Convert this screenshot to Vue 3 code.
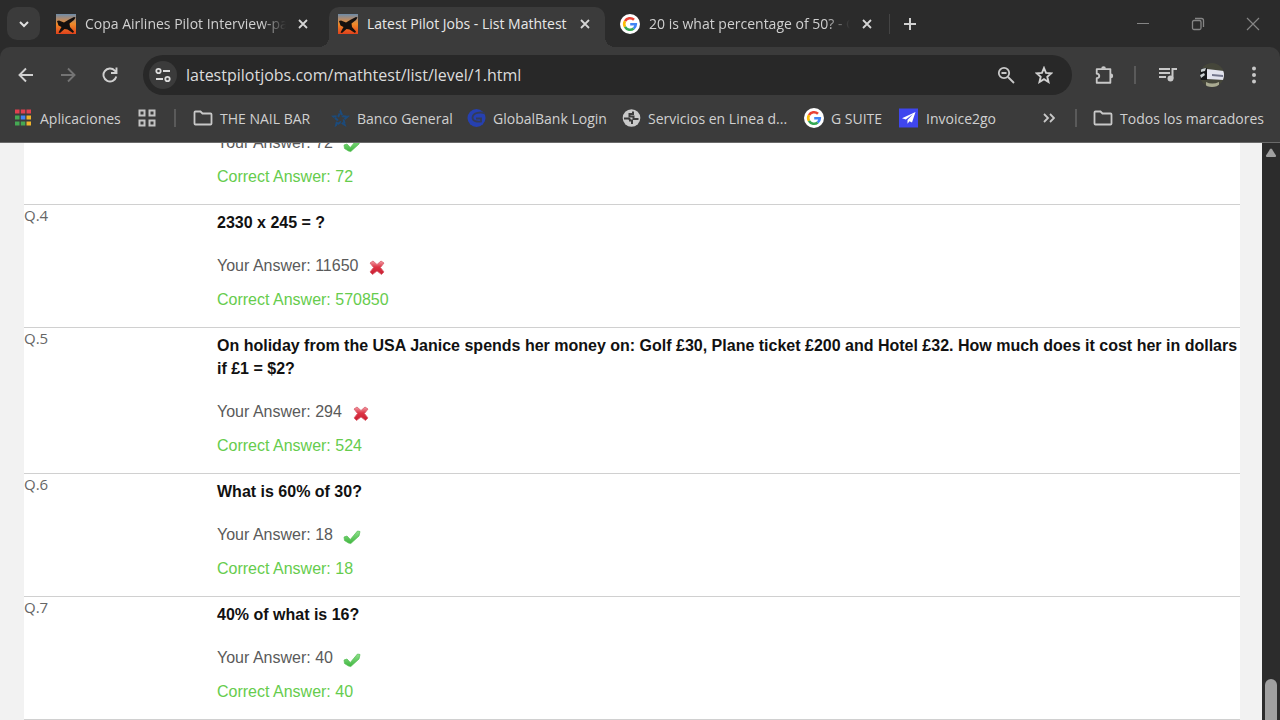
<script setup>
import { ref } from 'vue'

const address = ref('latestpilotjobs.com/mathtest/list/level/1.html')

const tabs = [
  { title: 'Copa Airlines Pilot Interview-pa', icon: 'plane', active: false },
  { title: 'Latest Pilot Jobs - List Mathtest', icon: 'plane', active: true },
  { title: '20 is what percentage of 50? - G', icon: 'google', active: false },
]

const bookmarks = [
  { label: 'THE NAIL BAR', icon: 'folder' },
  { label: 'Banco General', icon: 'star' },
  { label: 'GlobalBank Login', icon: 'global' },
  { label: 'Servicios en Linea d...', icon: 'globe' },
  { label: 'G SUITE', icon: 'google' },
  { label: 'Invoice2go', icon: 'invoice' },
]

const questions = [
  { id: 3, text: '6 x 12 = ?', given: '72', correct: '72' },
  { id: 4, text: '2330 x 245 = ?', given: '11650', correct: '570850' },
  {
    id: 5,
    text: 'On holiday from the USA Janice spends her money on: Golf £30, Plane ticket £200 and Hotel £32. How much does it cost her in dollars if £1 = $2?',
    given: '294',
    correct: '524',
  },
  { id: 6, text: 'What is 60% of 30?', given: '18', correct: '18' },
  { id: 7, text: '40% of what is 16?', given: '40', correct: '40' },
]
</script>

<template>
  <div class="window">
    <svg class="defs" aria-hidden="true">
      <defs>
        <linearGradient id="sky" x1="0" y1="0" x2="0" y2="1">
          <stop offset="0" stop-color="#6d8ba8" />
          <stop offset="0.25" stop-color="#b08a6c" />
          <stop offset="0.5" stop-color="#f08a28" />
          <stop offset="1" stop-color="#e0421c" />
        </linearGradient>
        <linearGradient id="tickFill" x1="0" y1="0" x2="0" y2="1">
          <stop offset="0" stop-color="#8fe08c" />
          <stop offset="1" stop-color="#3fb63f" />
        </linearGradient>
        <linearGradient id="crossFill" x1="0" y1="0" x2="0" y2="1">
          <stop offset="0" stop-color="#f3a0a8" />
          <stop offset="0.45" stop-color="#dd3344" />
          <stop offset="1" stop-color="#c81f32" />
        </linearGradient>
        <symbol id="plane" viewBox="0 0 20 20">
          <rect width="20" height="20" fill="url(#sky)" />
          <path d="M1 7 3 6.500 8 8.500 13 5.500 18 3 19.500 3.500 18 6 13.500 9.500 14 13 18 17.500 17 19 11.500 15.500 8.500 15 4 19 2.500 18.500 5.500 13 2.500 11.500Z" fill="#15100e" />
        </symbol>
        <symbol id="google" viewBox="0 0 20 20">
          <circle cx="10" cy="10" r="10" fill="#fff" />
          <g fill="none" stroke-width="2.600">
            <path d="M5 7.100A5.800 5.800 0 0 1 14 5.800" stroke="#ea4335" />
            <path d="M5 12.900A5.800 5.800 0 0 1 5 7.100" stroke="#fbbc05" />
            <path d="M13.700 14.500A5.800 5.800 0 0 1 5 12.900" stroke="#34a853" />
            <path d="M10.200 10.200H15.800A5.800 5.800 0 0 1 13.700 14.500" stroke="#4285f4" />
          </g>
        </symbol>
        <symbol id="folder" viewBox="0 0 20 20">
          <path d="M1.500 15.500V4.500Q1.500 3.500 2.500 3.500H7.500L9.500 5.500H17.500Q18.500 5.500 18.500 6.500V15.500Q18.500 16.500 17.500 16.500H2.500Q1.500 16.500 1.500 15.500Z" fill="none" stroke="#c8c8c8" stroke-width="1.800" />
        </symbol>
        <symbol id="star" viewBox="0 0 20 20">
          <path d="M10.500 3.500l2 4.700 5 .4-3.800 3.300 1.200 5-4.400-2.700L6.100 17l1.200-5.100-3.800-3.300 5-.4z" fill="none" stroke="#1c4b7c" stroke-width="2" stroke-dasharray="4 1" />
        </symbol>
        <symbol id="global" viewBox="0 0 20 20">
          <circle cx="10.500" cy="10" r="9" fill="#2640b0" />
          <path d="M19 5.500C15 3.500 7 4.500 6.500 9.500 6.500 13.500 11 14 15 13.500V10.500H10" fill="none" stroke="#343c58" stroke-width="1.800" />
        </symbol>
        <symbol id="globe" viewBox="0 0 20 20">
          <circle cx="10.500" cy="10" r="8.800" fill="#c9c9c9" />
          <path d="M3 10.500H7Q9 10.500 9 12.500H11V16M12 3.500V6H8.500V8.500H12.500V11H17.500" fill="none" stroke="#3b3b3b" stroke-width="2" />
        </symbol>
        <symbol id="invoice" viewBox="0 0 20 20">
          <rect width="19" height="19" y=".5" fill="#3f46ee" />
          <path d="M16.500 4 3 10.200 6.800 11.500 14 6 8.500 12V15.800L10.500 13.200 13 14.500Z" fill="#fff" />
        </symbol>
      </defs>
    </svg>

    <header class="chrome">
      <div class="tab-strip">
        <button class="tab-search" aria-label="Buscar pestañas">
          <svg width="12" height="12" viewBox="0 0 12 12"><path d="M2 4l4 4 4-4" fill="none" stroke="#e0e0e0" stroke-width="2" /></svg>
        </button>
        <div v-for="tab in tabs" :key="tab.title" class="tab" :class="{ active: tab.active }">
          <svg class="favicon" aria-hidden="true"><use :href="'#' + tab.icon" /></svg>
          <span class="tab-title">{{ tab.title }}</span>
          <button class="tab-close" aria-label="Cerrar">
            <svg width="10" height="10" viewBox="0 0 10 10"><path d="M1 1l8 8M9 1L1 9" stroke="#d5d5d5" stroke-width="1.800" /></svg>
          </button>
        </div>
        <span class="strip-divider"></span>
        <button class="new-tab" aria-label="Nueva pestaña">
          <svg width="14" height="14" viewBox="0 0 14 14"><path d="M7 1v12M1 7h12" stroke="#d0d0d0" stroke-width="2" /></svg>
        </button>
        <div class="window-controls">
          <button aria-label="Minimizar">
            <svg width="14" height="14" viewBox="0 0 14 14"><path d="M1 6.500h12" stroke="#858585" /></svg>
          </button>
          <button aria-label="Restaurar">
            <svg width="14" height="14" viewBox="0 0 14 14" fill="none" stroke="#858585" stroke-width="1.300"><rect x="1.500" y="3.500" width="8.500" height="9" rx="1.500" /><path d="M4 1.500h6.500q2 0 2 2V10" /></svg>
          </button>
          <button aria-label="Cerrar ventana">
            <svg width="14" height="14" viewBox="0 0 14 14"><path d="M1 1l12 12M13 1L1 13" stroke="#858585" stroke-width="1.200" /></svg>
          </button>
        </div>
      </div>

      <div class="panel">
        <nav class="toolbar">
          <button class="tool" aria-label="Atrás">
            <svg width="16" height="16" viewBox="0 0 16 16" fill="none" stroke="#d0d0d0" stroke-width="1.900"><path d="M15 8H2M8 1.500L1.500 8 8 14.500" /></svg>
          </button>
          <button class="tool" aria-label="Adelante">
            <svg width="16" height="16" viewBox="0 0 16 16" fill="none" stroke="#747474" stroke-width="1.900"><path d="M1 8h13M8 1.500L14.500 8 8 14.500" /></svg>
          </button>
          <button class="tool" aria-label="Volver a cargar">
            <svg width="16" height="16" viewBox="0 0 16 16" fill="none" stroke="#d0d0d0" stroke-width="1.900"><path d="M14.300 9.500A6.500 6.500 0 1 1 12.800 3.600L14.500 5.500M14.500 .5V6H9" /></svg>
          </button>
          <div class="omnibox">
            <button class="site-info" aria-label="Información del sitio">
              <svg width="16" height="16" viewBox="0 0 16 16" fill="none" stroke="#dcdcdc" stroke-width="1.800"><circle cx="3.500" cy="4" r="2.200" /><path d="M8 4h7M1 12h7" /><circle cx="12.500" cy="12" r="2.200" /></svg>
            </button>
            <input v-model="address" class="address" type="text" aria-label="Dirección" spellcheck="false" />
            <button class="tool" aria-label="Zoom">
              <svg width="18" height="18" viewBox="0 0 18 18" fill="none" stroke="#c8c8c8" stroke-width="1.800"><circle cx="7" cy="7" r="5.200" /><path d="M11 11l6 6M4.500 7h5" /></svg>
            </button>
            <button class="tool" aria-label="Añadir a marcadores">
              <svg width="18" height="18" viewBox="0 0 18 18" fill="none" stroke="#d0d0d0" stroke-width="1.900"><path d="M9 2l2 4.900 5.300.4-4 3.500 1.200 5.200L9 13.200 4.500 16l1.200-5.200-4-3.500L7 6.900z" /></svg>
            </button>
          </div>
          <button class="tool extensions" aria-label="Extensiones">
            <svg width="22" height="22" viewBox="0 0 22 22"><path d="M3 4.500h15v15H3v-5q2.800-.3 2.800-2.500T3 9.500z" fill="none" stroke="#c8c8c8" stroke-width="2" stroke-linejoin="round" /><path d="M7.900 4a2.600 2.600 0 0 1 5.200 0zM18.500 9.400a2.600 2.600 0 0 1 0 5.200z" fill="#c8c8c8" /></svg>
          </button>
          <span class="divider"></span>
          <button class="tool media" aria-label="Multimedia">
            <svg width="20" height="18" viewBox="0 0 20 18"><path d="M1 3h11M1 7h11M1 11h7" stroke="#c8c8c8" stroke-width="2" /><circle cx="12.500" cy="12.500" r="3" fill="#c8c8c8" /><path d="M14.500 12.500V3H19" fill="none" stroke="#c8c8c8" stroke-width="2" /></svg>
          </button>
          <button class="tool profile" aria-label="Perfil">
            <svg width="24" height="24" viewBox="0 0 24 24"><defs><clipPath id="face"><circle cx="12" cy="12" r="12" /></clipPath></defs><g clip-path="url(#face)"><rect width="24" height="24" fill="#45463a" /><path d="M0 5h7v12H0z" fill="#16171a" /><path d="M1 6l5-1-1 3-4 1zM0 12l4-2 1 2-4 3z" fill="#c9cfd1" /><path d="M7 6l17 2v9L7 16z" fill="#e3e4ee" /><path d="M12 11l11 1v2l-11-1z" fill="#74778d" /><path d="M6 19q6 3 13 0v5H6z" fill="#a9aa91" /></g></svg>
          </button>
          <button class="tool menu" aria-label="Menú">
            <svg width="6" height="18" viewBox="0 0 6 18" fill="#c8c8c8"><circle cx="3" cy="2.500" r="2" /><circle cx="3" cy="9" r="2" /><circle cx="3" cy="15.500" r="2" /></svg>
          </button>
        </nav>

        <nav class="bookmarks" aria-label="Marcadores">
          <a href="#" class="bookmark">
            <svg class="bookmark-icon" viewBox="0 0 20 20" aria-hidden="true">
              <path d="M2 1.500h4.500v4H2zM7.800 1.500h4.500v4H7.800zM13.500 1.500H18v4h-4.500z" fill="#e0404f" />
              <path d="M2 7.500h4.500v4H2z" fill="#45a853" /><path d="M7.800 7.500h4.500v4H7.800z" fill="#4285f4" /><path d="M13.500 7.500H18v4h-4.500z" fill="#f0b42c" />
              <path d="M2 13.500h4.500v4H2zM7.800 13.500h4.500v4H7.800z" fill="#45a853" /><path d="M13.500 13.500H18v4h-4.500z" fill="#f0b42c" />
            </svg>
            <span>Aplicaciones</span>
          </a>
          <button class="tab-groups" aria-label="Grupos de pestañas">
            <svg width="19" height="18" viewBox="0 0 19 18" fill="none" stroke="#c4c4c4" stroke-width="2"><path d="M2.500 1.500h5v5h-5zM12.500 1.500h5v5h-5zM2.500 11.500h5v5h-5zM12.500 11.500h5v5h-5z" /></svg>
          </button>
          <span class="divider"></span>
          <a v-for="mark in bookmarks" :key="mark.label" href="#" class="bookmark">
            <svg class="bookmark-icon" aria-hidden="true"><use :href="'#' + mark.icon" /></svg>
            <span>{{ mark.label }}</span>
          </a>
          <div class="bookmarks-end">
            <button class="more" aria-label="Más marcadores">
              <svg width="12" height="10" viewBox="0 0 12 10" fill="none" stroke="#c8c8c8" stroke-width="1.800"><path d="M1 1l4 4-4 4M7 1l4 4-4 4" /></svg>
            </button>
            <span class="divider"></span>
            <a href="#" class="bookmark">
              <svg class="bookmark-icon" aria-hidden="true"><use href="#folder" /></svg>
              <span>Todos los marcadores</span>
            </a>
          </div>
        </nav>
      </div>
    </header>

    <div class="view">
      <main class="page">
        <table class="results">
          <tbody>
            <tr v-for="q in questions" :key="q.id">
              <th scope="row">Q.{{ q.id }}</th>
              <td>
                <p class="question">{{ q.text }}</p>
                <p class="given">
                  <span>Your Answer: {{ q.given }}</span>
                  <svg v-if="q.given === q.correct" class="mark" viewBox="0 0 18 18" role="img" aria-label="Right">
                    <path d="M1 9 4 8 7.300 11.500 14.500 3 17 3.500 16 8 7.800 15.500 5.500 15 1.500 12.500Z" fill="url(#tickFill)" stroke="#53bd52" stroke-width=".7" />
                  </svg>
                  <svg v-else class="mark" viewBox="0 0 18 18" role="img" aria-label="Wrong">
                    <path d="M2 4 5 2 9 5.500 13 2 16 4 12.500 8.500 16 13 13.500 15.500 9 12 4.500 15.500 2 13 5.500 8.500Z" fill="url(#crossFill)" stroke="#d9606d" stroke-width=".8" />
                  </svg>
                </p>
                <p class="correct">Correct Answer: {{ q.correct }}</p>
              </td>
            </tr>
          </tbody>
        </table>
      </main>
      <div class="scrollbar" aria-hidden="true">
        <svg width="12" height="10" viewBox="0 0 12 10"><path d="M5 1.200q1-1.200 2 0l4 6.300q.4 1.500-1 1.500H2Q.6 9 1 7.500z" fill="#a0a0a0" /></svg>
        <div class="thumb"></div>
      </div>
    </div>
  </div>
</template>

<style>
html,
body {
  margin: 0;
  background: #f2f2f2;
}
</style>

<style scoped>
.window {
  display: flex;
  flex-direction: column;
  height: 100vh;
  overflow: hidden;
  font-family: "Open Sans", "Noto Sans", sans-serif;
}
.defs {
  position: absolute;
  width: 0;
  height: 0;
}
button {
  display: flex;
  align-items: center;
  justify-content: center;
  flex: none;
  padding: 0;
  border: 0;
  background: none;
}
a {
  color: inherit;
  text-decoration: none;
}
.chrome {
  flex: none;
  background: #2b2b2b;
  color: #d0d0d0;
}

.tab-strip {
  display: flex;
  align-items: center;
  height: 47px;
  padding-left: 7px;
}
.tab-search {
  width: 33px;
  height: 33px;
  margin-right: 7px;
  border-radius: 10px;
  background: #3b3b3b;
}
.tab {
  position: relative;
  display: flex;
  align-items: center;
  flex: 0 1 276px;
  min-width: 0;
  height: 33px;
  margin-right: 6px;
  padding: 0 13px 0 9px;
  box-sizing: border-box;
  font-size: 14px;
}
.tab.active {
  height: 40px;
  align-self: flex-end;
  padding-bottom: 7px;
  border-radius: 10px 10px 0 0;
  background: #3b3b3b;
  color: #e8e8e8;
}
.tab.active::before,
.tab.active::after {
  content: "";
  position: absolute;
  bottom: 0;
  width: 10px;
  height: 10px;
}
.tab.active::before {
  right: 100%;
  background: radial-gradient(circle at 0 0, transparent 10px, #3b3b3b 10px);
}
.tab.active::after {
  left: 100%;
  background: radial-gradient(circle at 100% 0, transparent 10px, #3b3b3b 10px);
}
.favicon {
  flex: none;
  width: 20px;
  height: 20px;
  margin-right: 9px;
}
.tab-title {
  flex: 1;
  min-width: 0;
  overflow: hidden;
  white-space: nowrap;
  mask-image: linear-gradient(to left, transparent 4px, #000 28px);
}
.tab.active .tab-title {
  mask-image: none;
}
.tab-close {
  width: 14px;
  height: 20px;
  margin-left: 6px;
}
.strip-divider {
  width: 1px;
  height: 20px;
  margin-right: 12px;
  background: #444;
}
.tab + .strip-divider {
  margin-left: -4px;
}
.new-tab {
  width: 16px;
  height: 20px;
}
.window-controls {
  display: flex;
  margin-left: auto;
}
.window-controls button {
  width: 55px;
  height: 47px;
}

.panel {
  border-radius: 10px 10px 0 0;
  border-bottom: 1px solid #6a6a6a;
  background: #3b3b3b;
}
.toolbar {
  display: flex;
  align-items: center;
  height: 56px;
  padding: 0 16px;
}
.toolbar > .tool {
  width: 20px;
  height: 32px;
  margin-right: 22px;
}
.omnibox {
  display: flex;
  align-items: center;
  flex: 1;
  min-width: 0;
  height: 40px;
  margin-left: 1px;
  margin-right: 22px;
  padding: 0 18px 0 6px;
  box-sizing: border-box;
  border-radius: 20px;
  background: #282828;
}
.omnibox .tool {
  width: 20px;
  height: 20px;
  margin-left: 18px;
}
.site-info {
  width: 28px;
  height: 28px;
  margin-right: 9px;
  border-radius: 50%;
  background: #3b3b3b;
}
.address {
  flex: 1;
  min-width: 0;
  padding: 0;
  border: 0;
  outline: 0;
  background: none;
  color: #dcdcdc;
  font-family: inherit;
  font-size: 16px;
}
.divider {
  flex: none;
  width: 2px;
  height: 18px;
  background: #5a5a5a;
}
.toolbar > .extensions {
  margin-right: 20px;
}
.toolbar > .media {
  margin-left: 22px;
}
.toolbar > .profile {
  width: 24px;
  margin-right: 20px;
}
.toolbar > .menu {
  margin-right: 0;
}

.bookmarks {
  display: grid;
  grid-template-columns: 124px 37px 19px 137px 136px 155px 183px 95px 100px 1fr;
  align-items: center;
  height: 39px;
  padding: 0 16px 9px 13px;
  box-sizing: border-box;
  font-size: 14px;
  white-space: nowrap;
}
.bookmark {
  display: flex;
  align-items: center;
  gap: 7px;
}
.bookmark-icon {
  flex: none;
  width: 20px;
  height: 20px;
}
.tab-groups {
  justify-content: flex-start;
}
.bookmarks-end {
  display: flex;
  align-items: center;
  justify-content: flex-end;
}
.more {
  margin-right: 20px;
}
.bookmarks-end .divider {
  margin-right: 16px;
}

.view {
  display: flex;
  flex: 1;
  min-height: 0;
}
.page {
  display: flex;
  flex: 1;
  flex-direction: column;
  justify-content: flex-end;
  min-width: 0;
  overflow: hidden;
  padding: 0 22px 0 24px;
  background: #f2f2f2;
}
.results {
  flex: none;
  width: 100%;
  border-collapse: separate;
  border-spacing: 0;
  border-bottom: 1px solid #d0d0d0;
  background: #fff;
  font-size: 16px;
}
th,
td {
  border-top: 1px solid #d0d0d0;
  text-align: left;
  vertical-align: top;
}
th {
  width: 193px;
  padding: 0;
  color: #666;
  font-size: 15px;
  font-weight: 400;
  line-height: 20px;
}
td {
  padding: 6px 0 16px;
  font-family: "Liberation Sans", Arial, sans-serif;
  line-height: 23px;
}
p {
  margin: 0;
}
.question {
  color: #111;
  font-weight: 700;
}
.given {
  display: flex;
  align-items: center;
  gap: 10px;
  margin: 20px 0 11px;
  color: #5a5a5a;
}
.mark {
  width: 18px;
  height: 18px;
  margin-top: 4px;
}
.correct {
  color: #66cc4d;
}

.scrollbar {
  display: flex;
  flex: none;
  flex-direction: column;
  align-items: center;
  justify-content: space-between;
  width: 18px;
  padding-top: 5px;
  box-sizing: border-box;
  background: #2c2c2c;
}
.thumb {
  width: 12px;
  height: 41px;
  border-radius: 6px 6px 0 0;
  background: #a0a0a0;
}
</style>
